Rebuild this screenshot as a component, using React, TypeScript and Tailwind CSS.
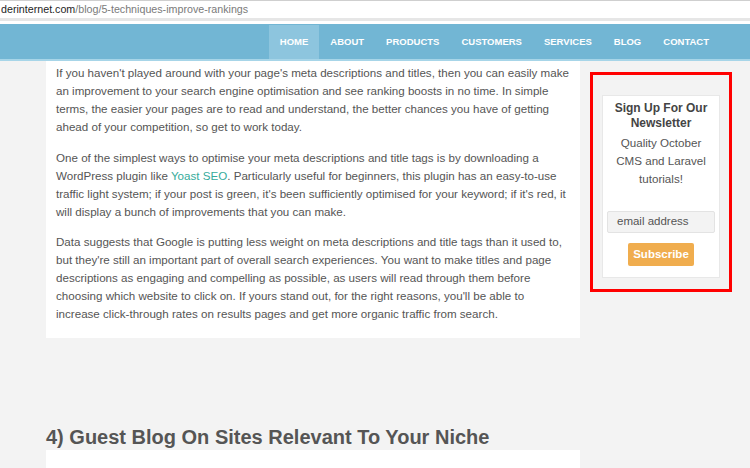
const navItems = ["HOME", "ABOUT", "PRODUCTS", "CUSTOMERS", "SERVICES", "BLOG", "CONTACT"];

const p1 = [
  "If you haven't played around with your page's meta descriptions and titles, then you can easily make",
  "an improvement to your search engine optimisation and see ranking boosts in no time. In simple",
  "terms, the easier your pages are to read and understand, the better chances you have of getting",
  "ahead of your competition, so get to work today.",
];

const p3 = [
  "Data suggests that Google is putting less weight on meta descriptions and title tags than it used to,",
  "but they're still an important part of overall search experiences. You want to make titles and page",
  "descriptions as engaging and compelling as possible, as users will read through them before",
  "choosing which website to click on. If yours stand out, for the right reasons, you'll be able to",
  "increase click-through rates on results pages and get more organic traffic from search.",
];

function Lines({ lines }: { lines: string[] }) {
  return (
    <>
      {lines.map((l) => (
        <span key={l} className="block whitespace-nowrap">
          {l}
        </span>
      ))}
    </>
  );
}

function Newsletter() {
  return (
    <div className="ml-[10px] mt-[11px] h-[220px] w-[142px] shrink-0 border-[3px] border-[#ff0000] pl-[9px] pr-[9px] pt-[20px]">
      <div className="flex h-[183px] w-[118px] flex-col items-center border border-[#e8e8e8] bg-white pt-[5px] text-center">
        <h3 className="text-[12px] font-bold leading-[15px] text-[#444]">
          Sign Up For Our
          <br />
          Newsletter
        </h3>
        <p className="mt-[3px] text-[11.6px] leading-[18px] text-[#555]">
          Quality October
          <br />
          CMS and Laravel
          <br />
          tutorials!
        </p>
        <div className="mt-[23px] flex h-[22px] w-[108px] items-center rounded-[2px] border border-[#e3e3e3] bg-[#f3f3f3] pl-[9px] text-left text-[11.5px] text-[#555]">
          email address
        </div>
        <button className="mt-[10px] h-[23px] w-[66px] rounded-[2px] bg-[#f0ad4e] text-[11.5px] font-bold text-white">
          Subscribe
        </button>
      </div>
    </div>
  );
}

export default function App() {
  return (
    <div className="h-[468px] w-[750px] overflow-hidden bg-[#f3f3f3] font-['Liberation_Sans',Arial,sans-serif]">
      {/* address bar */}
      <div className="flex h-[24px] items-start border-t border-[#cfcfcf] bg-white">
        <div className="flex h-[20px] w-full items-center border-b-[3px] border-[#e6e6e6] pl-[1px] text-[10.7px] leading-none">
          <span className="font-medium text-[#1e1e1e]">derinternet.com</span>
          <span className="text-[#7a7a7a]">/blog/5-techniques-improve-rankings</span>
        </div>
      </div>

      {/* nav */}
      <nav className="flex h-[37px] justify-end border-b-2 border-[#a7d5e8] bg-[#72b6d4] pr-[30px] pt-[1px]">
        {navItems.map((item) => (
          <a
            key={item}
            className={
              "flex items-center px-[11px] text-[9.5px] font-bold text-white " +
              (item === "HOME" ? "bg-[#8dc5de]" : "")
            }
          >
            {item}
          </a>
        ))}
      </nav>

      <div className="flex">
        <div className="ml-[46px] w-[534px] shrink-0">
          <article className="bg-white px-[10px] pb-[15px] pt-[3px] text-[11.6px] leading-[18px] text-[#555]">
            <p>
              <Lines lines={p1} />
            </p>
            <p className="mt-[13px]">
              <span className="block whitespace-nowrap">
                One of the simplest ways to optimise your meta descriptions and title tags is by downloading a
              </span>
              <span className="block whitespace-nowrap">
                WordPress plugin like <a className="text-[#35ab9b]">Yoast SEO</a>. Particularly useful for beginners, this plugin has an easy-to-use
              </span>
              <span className="block whitespace-nowrap">
                traffic light system; if your post is green, it's been sufficiently optimised for your keyword; if it's red, it
              </span>
              <span className="block whitespace-nowrap">will display a bunch of improvements that you can make.</span>
            </p>
            <p className="mt-[12px]">
              <Lines lines={p3} />
            </p>
          </article>

          <h2 className="mt-[87px] text-[20px] font-bold leading-[25px] text-[#555]">
            4) Guest Blog On Sites Relevant To Your Niche
          </h2>
          <div className="h-[40px] bg-white" />
        </div>

        <Newsletter />
      </div>
    </div>
  );
}
